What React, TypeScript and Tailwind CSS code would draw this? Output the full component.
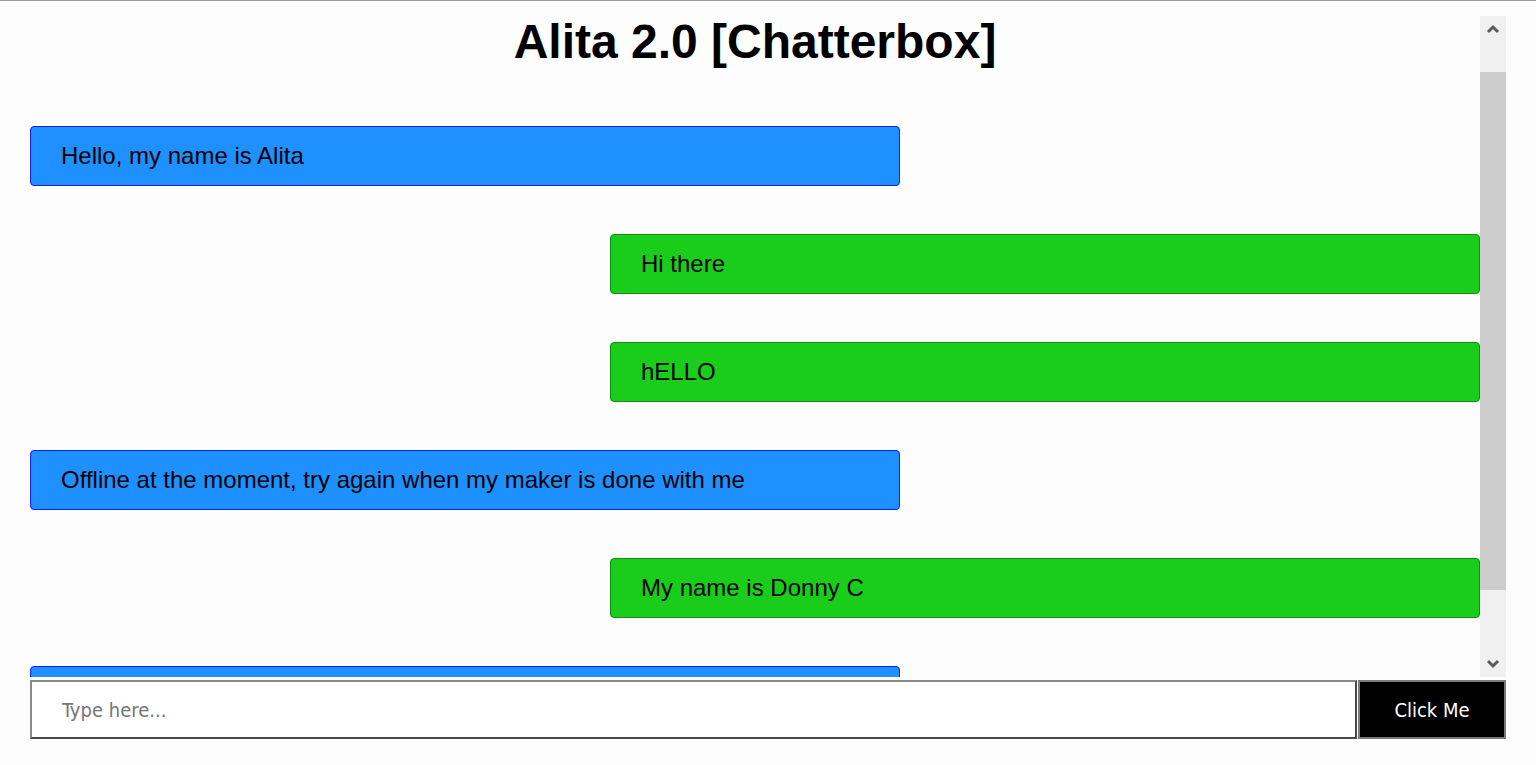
import React from 'react';

type Msg = { from: 'bot' | 'user'; text: string };

const messages: Msg[] = [
  { from: 'bot', text: 'Hello, my name is Alita' },
  { from: 'user', text: 'Hi there' },
  { from: 'user', text: 'hELLO' },
  { from: 'bot', text: 'Offline at the moment, try again when my maker is done with me' },
  { from: 'user', text: 'My name is Donny C' },
  { from: 'bot', text: 'Offline at the moment, try again when my maker is done with me' },
];

const Bubble: React.FC<{ msg: Msg }> = ({ msg }) => {
  const isBot = msg.from === 'bot';
  return (
    <div className={`flex w-full ${isBot ? 'justify-start' : 'justify-end'}`}>
      <div
        className={
          isBot
            ? 'w-[60%] shrink-0 rounded-[4px] border border-[#1a1aff] bg-[#1e90ff] px-[30px] py-[15px] text-[24px] leading-[28px] text-black'
            : 'w-[60%] shrink-0 rounded-[4px] border border-[#0f8f0f] bg-[#1acd1a] px-[30px] py-[15px] text-[24px] leading-[28px] text-black'
        }
      >
        {msg.text}
      </div>
    </div>
  );
};

// fake classic scrollbar, drawn to match the screenshot
const ScrollBar: React.FC = () => (
  <div className="flex w-[26px] shrink-0 flex-col bg-[#f0f0f0]">
    <div className="flex h-[26px] items-center justify-center">
      <svg width="14" height="10" viewBox="0 0 14 10">
        <path d="M2 8 L7 3 L12 8" fill="none" stroke="#5a5a5a" strokeWidth="3" />
      </svg>
    </div>
    <div className="h-[30px]" />
    <div className="h-[518px] bg-[#cdcdcd]" />
    <div className="flex-1" />
    <div className="flex h-[26px] items-center justify-center">
      <svg width="14" height="10" viewBox="0 0 14 10">
        <path d="M2 2 L7 7 L12 2" fill="none" stroke="#5a5a5a" strokeWidth="3" />
      </svg>
    </div>
  </div>
);

export default function App() {
  return (
    <div
      className="h-[765px] w-full overflow-hidden border-t border-[#9a9a9a] bg-[#fdfdfd] px-[30px] pt-[15px]"
      style={{ fontFamily: '"Liberation Sans", Arial, sans-serif' }}
    >
      {/* chat log */}
      <div className="flex h-[661px]">
        <div className="flex-1 overflow-hidden">
          <h1 className="mt-[-2px] text-center text-[48px] font-bold leading-[55px] text-black">
            Alita 2.0 [Chatterbox]
          </h1>
          <div className="mt-[57px] flex flex-col gap-[48px]">
            {messages.map((m, i) => (
              <Bubble key={i} msg={m} />
            ))}
          </div>
        </div>
        <ScrollBar />
      </div>

      {/* input row */}
      <div
        className="mt-[3px] flex h-[59px]"
        style={{ fontFamily: '"DejaVu Sans Condensed", "Noto Sans", sans-serif' }}
      >
        <input
          type="text"
          placeholder="Type here..."
          className="min-w-0 flex-1 border-2 border-t-[#8a8a8a] border-l-[#8a8a8a] border-b-[#4a4a4a] border-r-[#4a4a4a] bg-white px-[30px] text-[20px] text-black outline-none placeholder:text-[#757575]"
        />
        <button className="ml-px w-[148px] shrink-0 border-2 border-[#7a7a7a] bg-black text-[20px] text-white">
          Click Me
        </button>
      </div>
    </div>
  );
}
